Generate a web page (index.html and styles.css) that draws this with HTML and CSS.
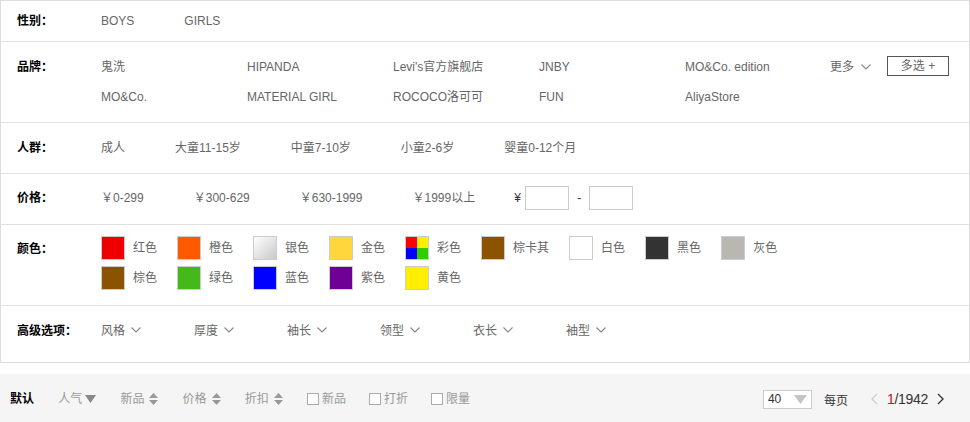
FILE: index.html
```html
<!DOCTYPE html>
<html lang="zh">
<head>
<meta charset="utf-8">
<title>筛选</title>
<link rel="stylesheet" href="styles.css">
</head>
<body>
<div class="filter">
  <div class="row r-gender">
    <div class="label">性别：</div>
    <div class="vals inline">
      <a class="opt">BOYS</a>
      <a class="opt">GIRLS</a>
    </div>
  </div>
  <div class="row r-brand">
    <div class="label">品牌：</div>
    <div class="brands">
      <a>鬼洗</a><a>HIPANDA</a><a>Levi's官方旗舰店</a><a>JNBY</a><a>MO&amp;Co. edition</a>
      <a>MO&amp;Co.</a><a>MATERIAL GIRL</a><a>ROCOCO洛可可</a><a>FUN</a><a>AliyaStore</a>
    </div>
    <div class="brand-ops">
      <span class="more">更多<svg class="chev" width="10" height="6" viewBox="0 0 10 6"><polyline points="0.5,0.5 5,5 9.5,0.5" fill="none" stroke="#888" stroke-width="1.1"/></svg></span>
      <span class="multi">多选 +</span>
    </div>
  </div>
  <div class="row r-people">
    <div class="label">人群：</div>
    <div class="vals inline">
      <a class="opt">成人</a>
      <a class="opt">大童11-15岁</a>
      <a class="opt">中童7-10岁</a>
      <a class="opt">小童2-6岁</a>
      <a class="opt">婴童0-12个月</a>
    </div>
  </div>
  <div class="row r-price">
    <div class="label">价格：</div>
    <div class="vals inline">
      <a class="opt">￥0-299</a>
      <a class="opt">￥300-629</a>
      <a class="opt">￥630-1999</a>
      <a class="opt last">￥1999以上</a>
      <span class="custom"><span class="yen">¥</span><span class="box"></span><span class="dash">-</span><span class="box"></span></span>
    </div>
  </div>
  <div class="row r-color">
    <div class="label">颜色：</div>
    <div class="colors">
      <div class="crow">
        <span class="c"><i class="sw" style="background:#ee0000"></i>红色</span>
        <span class="c"><i class="sw" style="background:#ff5a00"></i>橙色</span>
        <span class="c"><i class="sw silver"></i>银色</span>
        <span class="c"><i class="sw" style="background:#ffd63c"></i>金色</span>
        <span class="c"><i class="sw multi-c"></i>彩色</span>
        <span class="c"><i class="sw" style="background:#8b5300"></i>棕卡其</span>
        <span class="c"><i class="sw" style="background:#ffffff"></i>白色</span>
        <span class="c"><i class="sw" style="background:#333333"></i>黑色</span>
        <span class="c"><i class="sw" style="background:#b9b7b2"></i>灰色</span>
      </div>
      <div class="crow">
        <span class="c"><i class="sw" style="background:#8b5300"></i>棕色</span>
        <span class="c"><i class="sw" style="background:#45b81a"></i>绿色</span>
        <span class="c"><i class="sw" style="background:#0000ff"></i>蓝色</span>
        <span class="c"><i class="sw" style="background:#6e0096"></i>紫色</span>
        <span class="c"><i class="sw" style="background:#ffee00"></i>黄色</span>
      </div>
    </div>
  </div>
  <div class="row r-adv">
    <div class="label">高级选项：</div>
    <div class="vals inline">
      <span class="adv">风格<svg class="chev" width="10" height="6" viewBox="0 0 10 6"><polyline points="0.5,0.5 5,5 9.5,0.5" fill="none" stroke="#888" stroke-width="1.1"/></svg></span>
      <span class="adv">厚度<svg class="chev" width="10" height="6" viewBox="0 0 10 6"><polyline points="0.5,0.5 5,5 9.5,0.5" fill="none" stroke="#888" stroke-width="1.1"/></svg></span>
      <span class="adv">袖长<svg class="chev" width="10" height="6" viewBox="0 0 10 6"><polyline points="0.5,0.5 5,5 9.5,0.5" fill="none" stroke="#888" stroke-width="1.1"/></svg></span>
      <span class="adv">领型<svg class="chev" width="10" height="6" viewBox="0 0 10 6"><polyline points="0.5,0.5 5,5 9.5,0.5" fill="none" stroke="#888" stroke-width="1.1"/></svg></span>
      <span class="adv">衣长<svg class="chev" width="10" height="6" viewBox="0 0 10 6"><polyline points="0.5,0.5 5,5 9.5,0.5" fill="none" stroke="#888" stroke-width="1.1"/></svg></span>
      <span class="adv">袖型<svg class="chev" width="10" height="6" viewBox="0 0 10 6"><polyline points="0.5,0.5 5,5 9.5,0.5" fill="none" stroke="#888" stroke-width="1.1"/></svg></span>
    </div>
  </div>
</div>

<div class="sortbar">
  <div class="sorts">
    <span class="s active">默认</span>
    <span class="s">人气<svg class="tri" width="11" height="8" viewBox="0 0 11 8"><polygon points="0,0 11,0 5.5,8" fill="#888"/></svg></span>
    <span class="s">新品<svg class="ud" width="9" height="12" viewBox="0 0 9 12"><polygon points="0,5 4.5,0 9,5" fill="#999"/><polygon points="0,7 9,7 4.5,12" fill="#999"/></svg></span>
    <span class="s">价格<svg class="ud" width="9" height="12" viewBox="0 0 9 12"><polygon points="0,5 4.5,0 9,5" fill="#999"/><polygon points="0,7 9,7 4.5,12" fill="#999"/></svg></span>
    <span class="s">折扣<svg class="ud" width="9" height="12" viewBox="0 0 9 12"><polygon points="0,5 4.5,0 9,5" fill="#999"/><polygon points="0,7 9,7 4.5,12" fill="#999"/></svg></span>
    <span class="s chk"><i class="cb"></i>新品</span>
    <span class="s chk"><i class="cb"></i>打折</span>
    <span class="s chk"><i class="cb"></i>限量</span>
  </div>
  <div class="pager">
    <span class="sel">40<svg width="13" height="9" viewBox="0 0 13 9"><polygon points="0,0 13,0 6.5,9" fill="#c4c4c4"/></svg></span>
    <span class="per">每页</span>
    <svg class="prev" width="7" height="12" viewBox="0 0 7 12"><polyline points="6,1 1,6 6,11" fill="none" stroke="#ccc" stroke-width="1.2"/></svg>
    <span class="pages"><em>1</em>/1942</span>
    <svg class="next" width="7" height="12" viewBox="0 0 7 12"><polyline points="1,1 6,6 1,11" fill="none" stroke="#333" stroke-width="1.3"/></svg>
  </div>
</div>
</body>
</html>
```

FILE: styles.css
```css
* { box-sizing: border-box; }
body {
  margin: 0;
  font-family: "Liberation Sans", "Noto Sans CJK SC", sans-serif;
  font-size: 12px;
  color: #666;
  background: #fff;
}
a { color: #666; text-decoration: none; }

.filter {
  width: 970px;
  border: 1px solid #dcdcdc;
}
.row {
  display: flex;
  align-items: flex-start;
  border-top: 1px solid #e2e2e2;
  line-height: 20px;
}
.row:first-child { border-top: 0; }
.label {
  width: 100px;
  flex: none;
  padding-left: 16px;
  font-weight: bold;
  color: #000;
}
.inline { display: flex; align-items: center; }
.opt { margin-right: 50px; white-space: nowrap; }

.r-gender { padding: 10px 0; }

.r-brand { padding: 15px 0; }
.brands {
  display: grid;
  grid-template-columns: repeat(5, 146px);
  row-gap: 10px;
  width: 730px;
}
.brand-ops { display: flex; align-items: flex-start; }
.more { display: inline-flex; align-items: center; margin-left: -1px; }
.more .chev { margin-left: 7px; }
.multi {
  margin-left: 16px;
  margin-top: -1px;
  width: 62px;
  height: 20px;
  line-height: 18px;
  border: 1px solid #555;
  text-align: center;
  color: #666;
}

.r-people { padding: 15px 0; }

.r-price { padding: 12px 0 14px; line-height: 24px; }
.r-price .label { padding-top: 1px; line-height: 23px; }
.r-price .opt.last { margin-right: 39px; }
.custom { display: flex; align-items: center; color: #333; }
.yen { width: 11px; }
.box {
  width: 44px;
  height: 24px;
  border: 1px solid #ccc;
  background: #fff;
}
.dash { width: 20px; text-align: center; }

.r-color { padding: 11px 0 15px; line-height: 24px; }
.r-color .label { padding-top: 1px; line-height: 24px; }
.crow { display: flex; height: 24px; }
.crow + .crow { margin-top: 6px; }
.c {
  display: flex;
  align-items: center;
  margin-right: 20px;
  line-height: 26px;
}
.sw {
  display: block;
  width: 24px;
  height: 24px;
  border: 1px solid #ccc;
  margin-right: 8px;
  align-self: flex-start;
}
.silver { background: linear-gradient(135deg, #ffffff 0%, #e6e6e6 45%, #c9c9c9 100%); }
.multi-c {
  background:
    linear-gradient(#ff0000, #ff0000) 0 0 / 50% 50% no-repeat,
    linear-gradient(#ffee00, #ffee00) 100% 0 / 50% 50% no-repeat,
    linear-gradient(#0000ff, #0000ff) 0 100% / 50% 50% no-repeat,
    linear-gradient(#33cc00, #33cc00) 100% 100% / 50% 50% no-repeat;
}

.r-adv { padding: 15px 0 21px; }
.adv {
  display: inline-flex;
  align-items: center;
  width: 93px;
  white-space: nowrap;
}
.adv .chev { margin-left: 6px; margin-top: -2px; }

.sortbar {
  margin-top: 11px;
  height: 50px;
  background: #f4f5f4;
  display: flex;
  align-items: center;
  justify-content: space-between;
  padding: 0 26px 0 10px;
}
.sorts { display: flex; align-items: center; }
.s {
  display: inline-flex;
  align-items: center;
  margin-right: 24.2px;
  color: #999;
  line-height: 20px;
}
.s.chk { margin-right: 23px; }
.s.active { color: #000; font-weight: bold; }
.s .tri { margin-left: 3px; }
.s .ud { margin-left: 5px; }
.cb {
  display: block;
  width: 12px;
  height: 12px;
  border: 1px solid #aaa;
  background: #fff;
  margin-right: 3px;
}
.pager { display: flex; align-items: center; }
.sel {
  display: flex;
  align-items: center;
  justify-content: space-between;
  width: 49px;
  height: 19px;
  border: 1px solid #ccc;
  background: #fff;
  padding: 0 4px 0 4px;
  color: #333;
  margin-right: 12px;
}
.per { color: #333; margin-right: 23px; }
.prev { margin-right: 9px; }
.pages { font-size: 14px; color: #333; margin-right: 9px; letter-spacing: -0.3px; }
.pages em { font-style: normal; color: #e4002b; }
```
